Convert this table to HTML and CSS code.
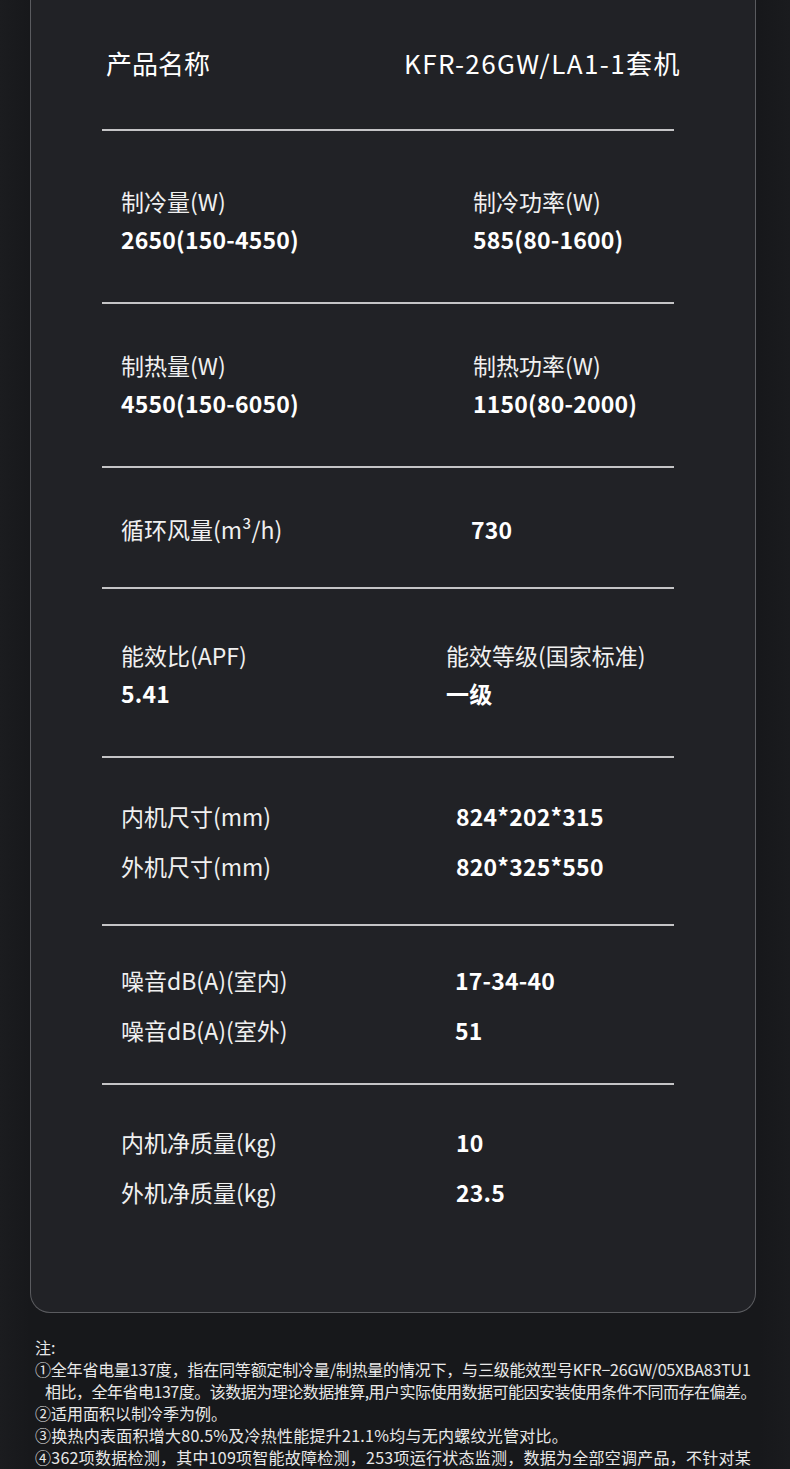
FILE: index.html
```html
<!DOCTYPE html>
<html lang="zh-CN">
<head>
<meta charset="utf-8">
<title>KFR-26GW/LA1-1 参数</title>
<link rel="stylesheet" href="styles.css">
</head>
<body>
<div class="page">
  <div class="card">
    <div class="title-row">
      <div class="title-label">产品名称</div>
      <div class="title-value">KFR-26GW/LA1-1套机</div>
    </div>

    <div class="section s1">
      <div class="grid cols-a">
        <div class="label">制冷量(W)</div>
        <div class="label">制冷功率(W)</div>
        <div class="value">2650(150-4550)</div>
        <div class="value">585(80-1600)</div>
      </div>
    </div>

    <div class="section s2">
      <div class="grid cols-a">
        <div class="label">制热量(W)</div>
        <div class="label">制热功率(W)</div>
        <div class="value">4550(150-6050)</div>
        <div class="value">1150(80-2000)</div>
      </div>
    </div>

    <div class="section s3">
      <div class="grid cols-b">
        <div class="label">循环风量(m³/h)</div>
        <div class="value">730</div>
      </div>
    </div>

    <div class="section s4">
      <div class="grid cols-c">
        <div class="label">能效比(APF)</div>
        <div class="label">能效等级(国家标准)</div>
        <div class="value">5.41</div>
        <div class="value">一级</div>
      </div>
    </div>

    <div class="section s5">
      <div class="grid cols-d tall">
        <div class="label">内机尺寸(mm)</div>
        <div class="value">824*202*315</div>
        <div class="label">外机尺寸(mm)</div>
        <div class="value">820*325*550</div>
      </div>
    </div>

    <div class="section s6">
      <div class="grid cols-e tall">
        <div class="label">噪音dB(A)(室内)</div>
        <div class="value">17-34-40</div>
        <div class="label">噪音dB(A)(室外)</div>
        <div class="value">51</div>
      </div>
    </div>

    <div class="section s7 last">
      <div class="grid cols-d tall">
        <div class="label">内机净质量(kg)</div>
        <div class="value">10</div>
        <div class="label">外机净质量(kg)</div>
        <div class="value">23.5</div>
      </div>
    </div>
  </div>

  <div class="notes">
    <p class="note-head">注:</p>
    <p class="note tight">①全年省电量137度，指在同等额定制冷量/制热量的情况下，与三级能效型号KFR−26GW/05XBA83TU1<br><span class="tighter">相比，全年省电137度。该数据为理论数据推算,用户实际使用数据可能因安装使用条件不同而存在偏差。</span></p>
    <p class="note">②适用面积以制冷季为例。</p>
    <p class="note wide">③换热内表面积增大80.5%及冷热性能提升21.1%均与无内螺纹光管对比。</p>
    <p class="note wide">④362项数据检测，其中109项智能故障检测，253项运行状态监测，数据为全部空调产品，不针对某</p>
  </div>
</div>
</body>
</html>
```

FILE: styles.css
```css
html, body {
  margin: 0;
  padding: 0;
}

body {
  background: #17181b;
  font-family: "Noto Sans CJK SC", "Noto Sans", sans-serif;
  color: #f2f2f2;
}

.page {
  width: 790px;
  height: 1469px;
  overflow: hidden;
  background: linear-gradient(90deg, #1b1c1f 0px, #17181b 30px, #17181b 760px, #1a1b1e 790px);
}

.card {
  margin: 0 34px 0 30px;
  background: #212226;
  border: 1px solid #5a5b5f;
  border-top: none;
  border-radius: 0 0 20px 20px;
  padding: 0 81px 0 71px;
}

.title-row {
  display: grid;
  grid-template-columns: 298px 1fr;
  align-items: center;
  padding-left: 4px;
  padding-bottom: 4px;
  border-bottom: 2px solid #c4c4c6;
  box-sizing: border-box;
  height: 131px;
}

.title-label,
.title-value {
  font-size: 26px;
  line-height: 36px;
  color: #ffffff;
  font-weight: 400;
  white-space: nowrap;
}

.title-value {
  letter-spacing: 1.4px;
}

.section {
  border-bottom: 2px solid #c4c4c6;
  padding-left: 19px;
}

.section.last {
  border-bottom: none;
}

.s1 { padding-top: 51px; padding-bottom: 44px; }
.s2 { padding-top: 42px; padding-bottom: 44px; }
.s3 { padding-top: 42px; padding-bottom: 39px; }
.s4 { padding-top: 47px; padding-bottom: 44px; }
.s5 { padding-top: 33px; padding-bottom: 33px; }
.s6 { padding-top: 29px; padding-bottom: 28px; }
.s7 { padding-top: 32px; padding-bottom: 95px; }

.grid {
  display: grid;
  line-height: 38px;
}

.grid.tall {
  line-height: 50px;
}

.cols-a { grid-template-columns: 352px 1fr; }
.cols-b { grid-template-columns: 350px 1fr; }
.cols-c { grid-template-columns: 325px 1fr; }
.cols-d { grid-template-columns: 335px 1fr; }
.cols-e { grid-template-columns: 334px 1fr; }

.label {
  font-size: 23px;
  font-weight: 400;
  color: #f0f0f0;
  white-space: nowrap;
}

.value {
  font-size: 23px;
  font-weight: 700;
  color: #ffffff;
  white-space: nowrap;
  letter-spacing: 0.2px;
}

.notes {
  padding: 23px 0 0 35px;
  font-size: 16px;
  line-height: 22px;
  color: #e8e8e8;
}

.notes p {
  margin: 0;
  white-space: nowrap;
}

.note {
  padding-left: 10px;
  text-indent: -10px;
}

.note.tight {
  letter-spacing: -0.2px;
}

.note .tighter {
  letter-spacing: -0.5px;
}

.note.wide {
  letter-spacing: 0.25px;
}
```
